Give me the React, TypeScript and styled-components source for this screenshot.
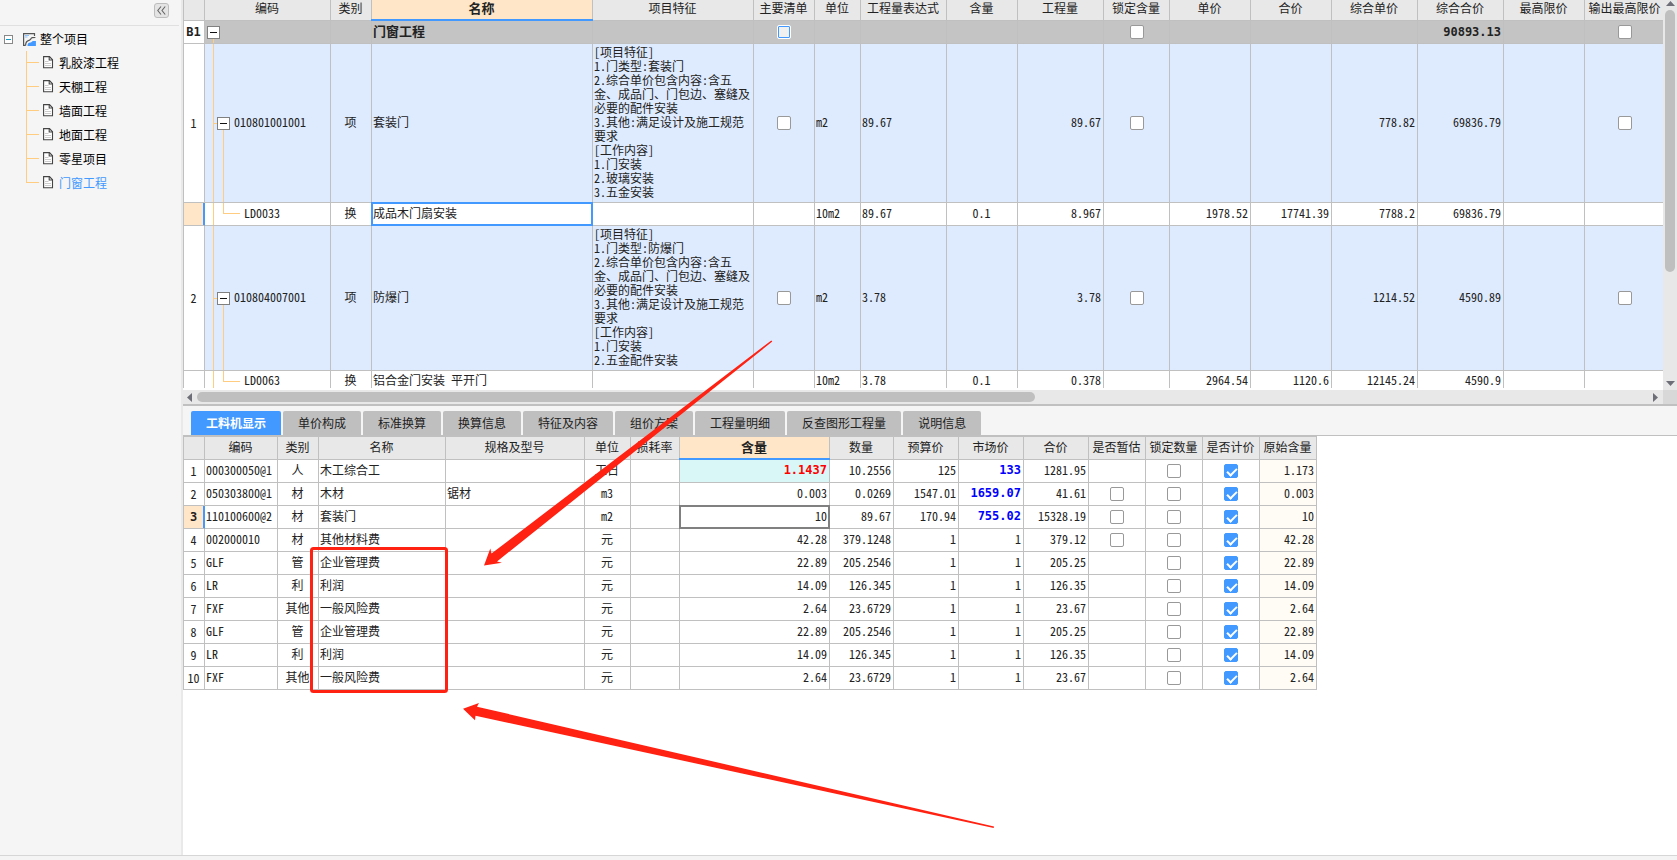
import React from "react";
import styled, { createGlobalStyle, css } from "styled-components";

const line = "#c0c0c0";
const blue = "#4299ff";
const peach = "#ffe6c8";
const guide = "#ffcc80";
const red = "#ff2112";
const boldDigits = `"DejaVu Sans Mono", "Noto Sans CJK SC", monospace`;

const GlobalStyle = createGlobalStyle`
  * { box-sizing: border-box; }
  body {
    margin: 0;
    background: #fff;
    color: #222;
    font: 12px/14px "Noto Sans CJK SC", "Liberation Sans", sans-serif;
    font-feature-settings: "hwid";
  }
  button, input { font: inherit; margin: 0; padding: 0; }
`;

const Page = styled.div`
  position: relative;
  display: flex;
  flex-direction: column;
  min-height: 100vh;
  overflow: hidden;
`;

const Body = styled.div`
  display: flex;
  flex: 1;
`;

const Footer = styled.footer`
  height: 5px;
  border-top: 1px solid #d6d6d6;
  background: #f4f4f4;
`;

/* ---------- project tree ---------- */

const Sidebar = styled.aside`
  flex: 0 0 183px;
  background: #f5f5f5;
  border-right: 2px solid #e9e9e9;
`;

const SidebarTop = styled.div`
  display: flex;
  justify-content: flex-end;
  height: 26px;
  margin-right: 2px;
  padding: 3px 10px 0 0;
  border-bottom: 1px solid #e0e0e0;
`;

const CollapseButton = styled.button`
  display: grid;
  place-items: center;
  width: 15px;
  height: 15px;
  border: 1px solid #bdbdbd;
  border-radius: 3px;
  background: #e4e4e4;
`;

const TreeRoot = styled.div`
  display: flex;
  align-items: center;
  height: 24px;
  margin-top: 1px;
  padding-left: 4px;
  color: #000;
`;

const RootToggle = styled.button`
  display: grid;
  place-items: center;
  width: 9px;
  height: 9px;
  margin-right: 10px;
  border: 1px solid #888;
  background: #fff;
`;

const RootLabel = styled.span`
  margin-left: 4px;
`;

const TreeList = styled.ul`
  margin: 0;
  padding: 0;
  list-style: none;
`;

const TreeItem = styled.li`
  height: 24px;
  padding-left: 43px;
  background:
    linear-gradient(${guide}, ${guide}) 26px 0 / 1px 100% no-repeat,
    linear-gradient(${guide}, ${guide}) 26px 11px / 13px 1px no-repeat;
  &:last-child {
    background:
      linear-gradient(${guide}, ${guide}) 26px 0 / 1px 12px no-repeat,
      linear-gradient(${guide}, ${guide}) 26px 11px / 13px 1px no-repeat;
  }
`;

const TreeLink = styled.a<{ $active?: boolean }>`
  display: flex;
  align-items: center;
  gap: 5px;
  height: 24px;
  color: ${(p) => (p.$active ? blue : "#000")};
  text-decoration: none;
`;

/* ---------- shared grid parts ---------- */

const Main = styled.main`
  display: flex;
  flex: 1;
  flex-direction: column;
  min-width: 0;
`;

const Grid = styled.table<{ $width: number }>`
  width: ${(p) => p.$width}px;
  table-layout: fixed;
  border-collapse: separate;
  border-spacing: 0;
  border-left: 1px solid ${line};
`;

const HeadCell = styled.th<{ $active?: boolean; $cut?: boolean }>`
  position: relative;
  height: ${(p) => (p.$cut ? 21 : 23)}px;
  padding: 0 1px ${(p) => (p.$cut ? 4 : 2)}px 0;
  border-right: 1px solid ${line};
  border-bottom: 1px solid ${line};
  background: ${(p) => (p.$active ? peach : "#e8e8e8")};
  font-size: ${(p) => (p.$active ? 13 : 12)}px;
  font-weight: ${(p) => (p.$active ? 700 : 400)};
  white-space: nowrap;
  ${(p) =>
    p.$active &&
    css`
      &::after {
        content: "";
        position: absolute;
        inset: auto -1px -1px -1px;
        height: 2px;
        background: ${blue};
      }
    `}
`;

type Align = "left" | "center" | "right";

const Cell = styled.td<{
  $align?: Align;
  $fill?: string;
  $ring?: string;
  $ink?: string;
}>`
  position: relative;
  padding: 0 2px 2px 1px;
  border-right: 1px solid ${line};
  border-bottom: 1px solid ${line};
  text-align: ${(p) => p.$align ?? "left"};
  background: ${(p) => p.$fill ?? "transparent"};
  white-space: nowrap;
  ${(p) =>
    p.$ink &&
    css`
      color: ${p.$ink};
      font-family: ${boldDigits};
      font-weight: 700;
    `}
  ${(p) =>
    p.$ring &&
    css`
      &::after {
        content: "";
        position: absolute;
        inset: -1px;
        border: 2px solid ${p.$ring};
      }
    `}
`;

const CheckCell = styled(Cell)`
  padding: 0;
`;

const RowHead = styled.th<{ $current?: boolean; $bold?: boolean }>`
  padding: 0 1px 1px 0;
  border-right: 1px solid ${(p) => (p.$current ? blue : line)};
  border-bottom: 1px solid ${line};
  background: ${(p) => (p.$current ? peach : "#fff")};
  box-shadow: ${(p) => (p.$current ? `inset -1px 0 0 ${blue}` : "none")};
  font-size: 12px;
  font-weight: 400;
  ${(p) =>
    p.$bold &&
    css`
      font-family: ${boldDigits};
      font-weight: 700;
    `}
`;

const Row = styled.tr<{ $kind?: "group" | "item" | "sub" | "cut" }>`
  height: 23px;
  background: ${(p) =>
    p.$kind === "group" ? "#c4c4c4" : p.$kind === "item" ? "#deebff" : "#fff"};
  ${(p) =>
    p.$kind === "group" &&
    css`
      font-size: 13px;
      font-weight: 700;
    `}
  ${(p) =>
    p.$kind === "cut" &&
    css`
      height: 17px;
      td,
      th {
        padding-top: 2px;
        padding-bottom: 1px;
        border-bottom: 0;
      }
    `}
`;

const GroupTotal = styled.span`
  font-family: ${boldDigits};
  font-size: 12px;
`;

const Features = styled.div`
  padding: 1px 0;
  white-space: pre-line;
`;

const Check = styled.input.attrs({ type: "checkbox" })<{ $hover?: boolean }>`
  appearance: none;
  display: block;
  position: relative;
  width: 14px;
  height: 14px;
  margin: 0 auto;
  border: 1px solid ${(p) => (p.$hover ? "#fff" : "#999")};
  border-radius: 2px;
  background: ${(p) => (p.$hover ? "#f0f0f0" : "#fff")};
  box-shadow: ${(p) => (p.$hover ? `inset 0 0 0 1px ${blue}` : "none")};
  &:checked {
    border-color: ${blue};
    background: ${blue};
  }
  &:checked::after {
    content: "";
    position: absolute;
    left: 4px;
    top: 1px;
    width: 4px;
    height: 8px;
    border: solid #fff;
    border-width: 0 2px 2px 0;
    transform: rotate(45deg);
  }
`;

const TreeCell = styled(Cell)<{ $level: 0 | 1 | 2 }>`
  padding: 0;
  background:
    linear-gradient(${guide}, ${guide}) 8px 100% / 1px
      ${(p) => (p.$level === 0 ? "50%" : "100%")} no-repeat
    ${(p) =>
      p.$level === 1 &&
      css`, linear-gradient(${guide}, ${guide}) 18px 100% / 1px 50% no-repeat,
        linear-gradient(${guide}, ${guide}) 8px 50% / 10px 1px no-repeat`}
    ${(p) =>
      p.$level === 2 &&
      css`, linear-gradient(${guide}, ${guide}) 18px 0 / 1px 11px no-repeat,
        linear-gradient(${guide}, ${guide}) 18px 10px / 17px 1px no-repeat`};
`;

const TreeCode = styled.div<{ $indent: number }>`
  display: flex;
  align-items: center;
  gap: 4px;
  padding-left: ${(p) => p.$indent}px;
`;

const CodeText = styled.span`
  padding-bottom: 2px;
`;

const Toggle = styled.button`
  display: grid;
  place-items: center;
  width: 13px;
  height: 13px;
  border: 1px solid #808080;
  background: #fff;
`;

/* ---------- scroll bars ---------- */

const UpperPane = styled.section`
  display: grid;
  grid-template-columns: minmax(0, 1fr) 14px;
  border-bottom: 2px solid ${line};
`;

const UpperView = styled.div`
  overflow: hidden;
  padding-bottom: 2px;
`;

const VBar = styled.div`
  display: flex;
  flex-direction: column;
  align-items: center;
  padding: 1px 0 4px;
  background: #e8e8e8;
`;

const VThumb = styled.div`
  flex: 0 0 68%;
  width: 10px;
  margin: 4px 0 auto;
  border-radius: 5px;
  background: #bfbfbf;
`;

const HBar = styled.div`
  display: flex;
  align-items: center;
  height: 14px;
  padding: 0 5px 0 4px;
  background: #e8e8e8;
`;

const HThumb = styled.div`
  flex: 0 0 57%;
  height: 10px;
  margin: 0 auto 0 5px;
  border-radius: 5px;
  background: #bfbfbf;
`;

const Corner = styled.div`
  background: #d8d8d8;
`;

/* ---------- lower pane ---------- */

const Tabs = styled.div`
  display: flex;
  gap: 2px;
  padding: 5px 0 0 8px;
  border-bottom: 1px solid ${line};
  background: #f5f5f5;
`;

const Tab = styled.button<{ $active?: boolean }>`
  height: 24px;
  padding: 0 15px;
  border: 0;
  border-radius: 2px 2px 0 0;
  background: ${(p) => (p.$active ? blue : "#bfbfbf")};
  color: ${(p) => (p.$active ? "#fff" : "#222")};
  font-weight: ${(p) => (p.$active ? 700 : 400)};
  white-space: nowrap;
`;

const LowerGrid = styled(Grid)`
  border-top: 1px solid ${line};
`;

const Annotations = styled.svg`
  position: absolute;
  left: 0;
  top: 0;
  pointer-events: none;
`;

/* ---------- icons ---------- */

const DocIcon = () => (
  <svg width="11" height="14" viewBox="0 0 11 14" fill="none">
    <path d="M.6.600h5.900L9.500 3.800v8H.6z" fill="#fff" stroke="#444" strokeWidth="1.1" />
    <path d="M6.200.6V4h3.300" stroke="#444" strokeWidth="1.1" />
    <path d="M2 5.500h3.500M2 7.500h6M2 9.500h6" stroke="#ccc" />
  </svg>
);

const ProjectIcon = () => (
  <svg width="13" height="13" viewBox="0 0 13 13" fill="none">
    <path d="M11.5 3V.6H.6v11.8h2" stroke="#555" strokeWidth="1.2" />
    <path d="M2 2.500h4M2 4h2.500" stroke="#8cc3ff" />
    <path d="M2.600 12.400c0-3 1-4.500 3.400-5 1.500-.3 1.800-2.300 3.200-2.700l3.200-.2" stroke="#555" strokeWidth="1.200" />
    <path d="M4.500 12.900c0-2.500 1-3.400 3-3.400 1.300 0 1.500-1.500 2.500-1.500h2.900v4.900z" fill={blue} />
  </svg>
);

const Minus = ({ color = "#111", size = 7 }: { color?: string; size?: number }) => (
  <svg width={size} height="1" viewBox={`0 0 ${size} 1`}>
    <path d={`M0 .5h${size}`} stroke={color} />
  </svg>
);

const Arrow = ({ d, w, h }: { d: string; w: number; h: number }) => (
  <svg width={w} height={h} viewBox={`0 0 ${w} ${h}`}>
    <path d={d} fill="#6e6e78" />
  </svg>
);

/* ---------- data ---------- */

const projects = ["乳胶漆工程", "天棚工程", "墙面工程", "地面工程", "零星项目", "门窗工程"];

const upperCols: [string, number][] = [
  ["", 21], ["编码", 126], ["类别", 41], ["名称", 221], ["项目特征", 161],
  ["主要清单", 61], ["单位", 46], ["工程量表达式", 86], ["含量", 71], ["工程量", 86],
  ["锁定含量", 66], ["单价", 81], ["合价", 81], ["综合单价", 86], ["综合合价", 86],
  ["最高限价", 81], ["输出最高限价", 81],
];

const doorFeatures = (type: string, work: string[]) =>
  [
    "[项目特征]",
    "1.门类型:" + type,
    "2.综合单价包含内容:含五",
    "金、成品门、门包边、塞缝及",
    "必要的配件安装",
    "3.其他:满足设计及施工规范",
    "要求",
    "[工作内容]",
    ...work,
  ].join("\n");

interface BillItem {
  no: string; code: string; name: string; features: string;
  qty: string; unitPrice: string; total: string;
}
interface SubItem {
  code: string; name: string; expr: string; qty: string;
  price: string; sum: string; unitPrice: string; total: string;
}

const items: { bill: BillItem; sub: SubItem }[] = [
  {
    bill: {
      no: "1", code: "010801001001", name: "套装门",
      features: doorFeatures("套装门", ["1.门安装", "2.玻璃安装", "3.五金安装"]),
      qty: "89.67", unitPrice: "778.82", total: "69836.79",
    },
    sub: {
      code: "LD0033", name: "成品木门扇安装", expr: "89.67", qty: "8.967",
      price: "1978.52", sum: "17741.39", unitPrice: "7788.2", total: "69836.79",
    },
  },
  {
    bill: {
      no: "2", code: "010804007001", name: "防爆门",
      features: doorFeatures("防爆门", ["1.门安装", "2.五金配件安装"]),
      qty: "3.78", unitPrice: "1214.52", total: "4590.89",
    },
    sub: {
      code: "LD0063", name: "铝合金门安装 平开门", expr: "3.78", qty: "0.378",
      price: "2964.54", sum: "1120.6", unitPrice: "12145.24", total: "4590.9",
    },
  },
];

const tabs = ["工料机显示", "单价构成", "标准换算", "换算信息", "特征及内容", "组价方案", "工程量明细", "反查图形工程量", "说明信息"];

const lowerCols: [string, number][] = [
  ["", 21], ["编码", 73], ["类别", 41], ["名称", 127], ["规格及型号", 139],
  ["单位", 46], ["损耗率", 49], ["含量", 150], ["数量", 64], ["预算价", 65],
  ["市场价", 65], ["合价", 65], ["是否暂估", 57], ["锁定数量", 57], ["是否计价", 57], ["原始含量", 57],
];

// code, kind, name, spec, unit, content, quantity, budget price, market price, sum, original content
const resources: string[][] = [
  ["000300050@1", "人", "木工综合工", "", "工日", "1.1437", "10.2556", "125", "133", "1281.95", "1.173"],
  ["050303800@1", "材", "木材", "锯材", "m3", "0.003", "0.0269", "1547.01", "1659.07", "41.61", "0.003"],
  ["110100600@2", "材", "套装门", "", "m2", "10", "89.67", "170.94", "755.02", "15328.19", "10"],
  ["002000010", "材", "其他材料费", "", "元", "42.28", "379.1248", "1", "1", "379.12", "42.28"],
  ["GLF", "管", "企业管理费", "", "元", "22.89", "205.2546", "1", "1", "205.25", "22.89"],
  ["LR", "利", "利润", "", "元", "14.09", "126.345", "1", "1", "126.35", "14.09"],
  ["FXF", "其他", "一般风险费", "", "元", "2.64", "23.6729", "1", "1", "23.67", "2.64"],
  ["GLF", "管", "企业管理费", "", "元", "22.89", "205.2546", "1", "1", "205.25", "22.89"],
  ["LR", "利", "利润", "", "元", "14.09", "126.345", "1", "1", "126.35", "14.09"],
  ["FXF", "其他", "一般风险费", "", "元", "2.64", "23.6729", "1", "1", "23.67", "2.64"],
];

const totalWidth = (cols: [string, number][]) => cols.reduce((n, c) => n + c[1], 1);

const Head = ({ cols, active, cut }: { cols: [string, number][]; active: string; cut?: boolean }) => (
  <>
    <colgroup>
      {cols.map(([label, width]) => (
        <col key={label} width={width} />
      ))}
    </colgroup>
    <thead>
      <tr>
        {cols.map(([label]) => (
          <HeadCell key={label} scope="col" $active={label === active} $cut={cut}>
            {label}
          </HeadCell>
        ))}
      </tr>
    </thead>
  </>
);

const BillRow = ({ bill }: { bill: BillItem }) => (
  <Row $kind="item">
    <RowHead scope="row">{bill.no}</RowHead>
    <TreeCell $level={1}>
      <TreeCode $indent={12}>
        <Toggle aria-label={"折叠 " + bill.code}><Minus /></Toggle>
        <CodeText>{bill.code}</CodeText>
      </TreeCode>
    </TreeCell>
    <Cell $align="center">项</Cell>
    <Cell>{bill.name}</Cell>
    <Cell><Features>{bill.features}</Features></Cell>
    <CheckCell><Check aria-label="主要清单" /></CheckCell>
    <Cell>m2</Cell>
    <Cell>{bill.qty}</Cell>
    <Cell />
    <Cell $align="right">{bill.qty}</Cell>
    <CheckCell><Check aria-label="锁定含量" /></CheckCell>
    <Cell />
    <Cell />
    <Cell $align="right">{bill.unitPrice}</Cell>
    <Cell $align="right">{bill.total}</Cell>
    <Cell />
    <CheckCell><Check aria-label="输出最高限价" /></CheckCell>
  </Row>
);

const SubRow = ({ sub, current, cut }: { sub: SubItem; current?: boolean; cut?: boolean }) => (
  <Row $kind={cut ? "cut" : "sub"}>
    <RowHead $current={current} />
    <TreeCell $level={2}>
      <TreeCode $indent={39}>
        {cut ? sub.code : <CodeText>{sub.code}</CodeText>}
      </TreeCode>
    </TreeCell>
    <Cell $align="center">换</Cell>
    <Cell $ring={current ? blue : undefined}>{sub.name}</Cell>
    <Cell />
    <Cell />
    <Cell>10m2</Cell>
    <Cell>{sub.expr}</Cell>
    <Cell $align="center">0.1</Cell>
    <Cell $align="right">{sub.qty}</Cell>
    <Cell />
    <Cell $align="right">{sub.price}</Cell>
    <Cell $align="right">{sub.sum}</Cell>
    <Cell $align="right">{sub.unitPrice}</Cell>
    <Cell $align="right">{sub.total}</Cell>
    <Cell />
    <Cell />
  </Row>
);

export default function App() {
  return (
    <Page>
      <GlobalStyle />
      <Body>
        <Sidebar>
          <SidebarTop>
            <CollapseButton aria-label="收起侧栏">
              <svg width="9" height="9" viewBox="0 0 9 9" fill="none" stroke="#666" strokeWidth="1.1">
                <path d="M4 .5L.8 4.500 4 8.500M8.200.5L5 4.500l3.200 4" />
              </svg>
            </CollapseButton>
          </SidebarTop>
          <TreeRoot>
            <RootToggle aria-label="折叠整个项目"><Minus color="#1b9bc4" size={5} /></RootToggle>
            <ProjectIcon />
            <RootLabel>整个项目</RootLabel>
          </TreeRoot>
          <TreeList>
            {projects.map((name) => (
              <TreeItem key={name}>
                <TreeLink href="#" $active={name === "门窗工程"}>
                  <DocIcon />
                  {name}
                </TreeLink>
              </TreeItem>
            ))}
          </TreeList>
        </Sidebar>

        <Main>
          <UpperPane>
            <UpperView>
              <Grid $width={totalWidth(upperCols)}>
                <Head cols={upperCols} active="名称" cut />
                <tbody>
                  <Row $kind="group">
                    <RowHead scope="row" $bold>B1</RowHead>
                    <TreeCell $level={0}>
                      <TreeCode $indent={2}>
                        <Toggle aria-label="折叠门窗工程"><Minus /></Toggle>
                      </TreeCode>
                    </TreeCell>
                    <Cell />
                    <Cell>门窗工程</Cell>
                    <Cell />
                    <CheckCell><Check aria-label="主要清单" $hover /></CheckCell>
                    <Cell />
                    <Cell />
                    <Cell />
                    <Cell />
                    <CheckCell><Check aria-label="锁定含量" /></CheckCell>
                    <Cell />
                    <Cell />
                    <Cell />
                    <Cell $align="right"><GroupTotal>90893.13</GroupTotal></Cell>
                    <Cell />
                    <CheckCell><Check aria-label="输出最高限价" /></CheckCell>
                  </Row>
                  {items.map(({ bill, sub }, i) => (
                    <React.Fragment key={bill.code}>
                      <BillRow bill={bill} />
                      <SubRow sub={sub} current={i === 0} cut={i === items.length - 1} />
                    </React.Fragment>
                  ))}
                </tbody>
              </Grid>
            </UpperView>
            <VBar>
              <Arrow d="M0 5L4.500 0 9 5z" w={9} h={5} />
              <VThumb />
              <Arrow d="M0 0h9L4.500 5z" w={9} h={5} />
            </VBar>
            <HBar>
              <Arrow d="M5 0v9L0 4.500z" w={5} h={9} />
              <HThumb />
              <Arrow d="M0 0v9l5-4.500z" w={5} h={9} />
            </HBar>
            <Corner />
          </UpperPane>

          <Tabs role="tablist">
            {tabs.map((t, i) => (
              <Tab key={t} role="tab" aria-selected={i === 0} $active={i === 0}>
                {t}
              </Tab>
            ))}
          </Tabs>
          <LowerGrid $width={totalWidth(lowerCols)}>
            <Head cols={lowerCols} active="含量" />
            <tbody>
              {resources.map((r, i) => (
                <Row key={i}>
                  <RowHead scope="row" $current={i === 2} $bold={i === 2}>{i + 1}</RowHead>
                  <Cell>{r[0]}</Cell>
                  <Cell $align="center">{r[1]}</Cell>
                  <Cell>{r[2]}</Cell>
                  <Cell>{r[3]}</Cell>
                  <Cell $align="center">{r[4]}</Cell>
                  <Cell />
                  <Cell
                    $align="right"
                    $fill={i === 0 ? "#d9f7f7" : undefined}
                    $ink={i === 0 ? "#f00" : undefined}
                    $ring={i === 2 ? "#808080" : undefined}
                  >
                    {r[5]}
                  </Cell>
                  <Cell $align="right">{r[6]}</Cell>
                  <Cell $align="right">{r[7]}</Cell>
                  <Cell $align="right" $ink={i < 3 ? "#00f" : undefined}>{r[8]}</Cell>
                  <Cell $align="right">{r[9]}</Cell>
                  <CheckCell>{i > 0 && i < 4 && <Check aria-label="是否暂估" />}</CheckCell>
                  <CheckCell><Check aria-label="锁定数量" /></CheckCell>
                  <CheckCell><Check aria-label="是否计价" defaultChecked /></CheckCell>
                  <Cell $align="right" $fill="#fffbf5">{r[10]}</Cell>
                </Row>
              ))}
            </tbody>
          </LowerGrid>
        </Main>
      </Body>
      <Footer />

      <Annotations width="1000" height="840" viewBox="0 0 1000 840" aria-hidden="true">
        <rect x="311.500" y="548.500" width="135" height="143" rx="2" fill="none" stroke={red} strokeWidth="3" />
        <path d="M484 565.500L490.300 548.500 491.500 553.500 771.300 340.500 772.300 341.500 497 561.500 502 562.700z" fill={red} />
        <path d="M463 708.700L479 703 477 706.700 994 826.500 993.700 828 475.500 715.700 475 720.300z" fill={red} />
      </Annotations>
    </Page>
  );
}
